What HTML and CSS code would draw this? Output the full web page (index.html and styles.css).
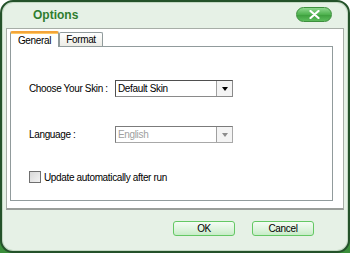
FILE: index.html
```html
<!DOCTYPE html>
<html>
<head>
  <link rel="stylesheet" href="styles.css">
</head>
<body>
  <div class="window">
    <div class="titlebar">
      <span class="title">Options</span>
      <button class="close-btn" aria-label="Close">
        <svg width="11" height="9" viewBox="0 0 11 9"><path d="M1.5 1 L9.5 8 M9.5 1 L1.5 8" stroke="#fff" stroke-width="2.2" stroke-linecap="round"/></svg>
      </button>
    </div>

    <div class="panel">
      <div class="tabs">
        <div class="tab active">General</div>
        <div class="tab">Format</div>
      </div>
      <div class="tab-body">
        <div class="form-grid">
          <label class="field-label">Choose Your Skin :</label>
          <div class="select">
            <span class="select-value">Default Skin</span>
            <span class="select-arrow"><i class="tri"></i></span>
          </div>

          <label class="field-label">Language :</label>
          <div class="select disabled">
            <span class="select-value">English</span>
            <span class="select-arrow"><i class="tri"></i></span>
          </div>
        </div>

        <div class="check-row">
          <span class="checkbox"></span>
          <span>Update automatically after run</span>
        </div>
      </div>
    </div>

    <div class="footer">
      <button class="btn">OK</button>
      <button class="btn">Cancel</button>
    </div>
  </div>
</body>
</html>
```

FILE: styles.css
```css
html, body {
  margin: 0;
  padding: 0;
}

body {
  width: 350px;
  height: 253px;
  overflow: hidden;
  background: linear-gradient(#fff 0, #fff 200px, #3b8f3b 200px);
  font-family: 'Liberation Sans', Arial, sans-serif;
  font-size: 10px;
  letter-spacing: -0.35px;
  color: #000;
}

.window {
  box-sizing: border-box;
  width: 350px;
  height: 253px;
  border: 2px solid #24522a;
  border-radius: 13px;
  background: #e6f1e6;
  box-shadow: inset 0 0 0 1px #c3d8c3;
  display: flex;
  flex-direction: column;
}

.titlebar {
  height: 26px;
  display: flex;
  align-items: center;
  padding: 0 16px 0 31px;
}

.title {
  font-size: 12px;
  font-weight: bold;
  letter-spacing: 0;
  color: #2f7d2f;
  margin-top: -1px;
}

.close-btn {
  margin-left: auto;
  width: 36px;
  height: 15px;
  margin-top: -1px;
  padding: 0;
  border: 1px solid #3d8f3d;
  border-radius: 8px;
  background: linear-gradient(#8fd88f, #4fb24f 50%, #3c9e3c 51%, #5cbc5c);
  display: flex;
  align-items: center;
  justify-content: center;
}

.panel {
  margin: 0 4px;
  height: 182px;
  box-sizing: border-box;
  border: 1px solid #a7aea7;
  border-bottom: 2px solid #9a9e9a;
  background: #fff;
  padding: 1px 10px 0 3px;
  display: flex;
  flex-direction: column;
}

.tabs {
  display: flex;
  align-items: flex-end;
  height: 16px;
  position: relative;
  z-index: 1;
}

.tab {
  box-sizing: border-box;
  width: 44px;
  height: 14px;
  border: 1px solid #919b9c;
  border-bottom: none;
  border-radius: 2px 2px 0 0;
  background: linear-gradient(#fff, #ecece6);
  line-height: 13px;
  text-align: center;
}

.tab.active {
  width: 49px;
  height: 16px;
  background: #fff;
  border-top: 2px solid #f3a43a;
  box-shadow: inset 0 1px 0 #ffc965;
  line-height: 15px;
  margin-bottom: -1px;
}

.tab-body {
  flex: 1;
  margin-bottom: 7px;
  border: 1px solid #919b9c;
  background: #fff;
  padding: 33px 0 0 18px;
}

.form-grid {
  display: grid;
  grid-template-columns: 86px 118px;
  row-gap: 29px;
  align-items: center;
}

.field-label {
  white-space: nowrap;
}

.select {
  box-sizing: border-box;
  height: 17px;
  border: 1px solid #4f4f4f;
  border-right-color: #8a8a8a;
  border-bottom-color: #8a8a8a;
  display: flex;
  align-items: stretch;
  background: #fff;
}

.select-value {
  flex: 1;
  padding-left: 2px;
  line-height: 15px;
}

.select-arrow {
  width: 15px;
  border-left: 1px solid #a0a0a0;
  background: #f4f4f4;
  display: flex;
  align-items: center;
  justify-content: center;
}

.tri {
  width: 0;
  height: 0;
  border-left: 3.5px solid transparent;
  border-right: 3.5px solid transparent;
  border-top: 4px solid #000;
}

.select.disabled {
  border-color: #7b7b7b;
  border-right-color: #a8a8a8;
  border-bottom-color: #a8a8a8;
}

.select.disabled .select-value {
  color: #a0a0a0;
}

.select.disabled .tri {
  border-top-color: #8d8d8d;
}

.check-row {
  display: flex;
  align-items: center;
  gap: 3px;
  margin-top: 28px;
}

.checkbox {
  box-sizing: border-box;
  width: 12px;
  height: 12px;
  border: 1px solid #6f6f6f;
  background: linear-gradient(135deg, #d8d8d8, #f2f2f2);
}

.footer {
  flex: 1;
  display: flex;
  justify-content: flex-end;
  align-items: flex-start;
  gap: 17px;
  padding: 11px 34px 0 0;
}

.btn {
  box-sizing: border-box;
  width: 62px;
  height: 15px;
  padding: 0;
  border: 1px solid #64c864;
  border-radius: 3px;
  background: linear-gradient(#f4fcf4, #dcf3dc 60%, #c7ecc7);
  font-family: 'Liberation Sans', Arial, sans-serif;
  font-size: 10px;
  letter-spacing: -0.35px;
  color: #000;
  line-height: 13px;
}
```
